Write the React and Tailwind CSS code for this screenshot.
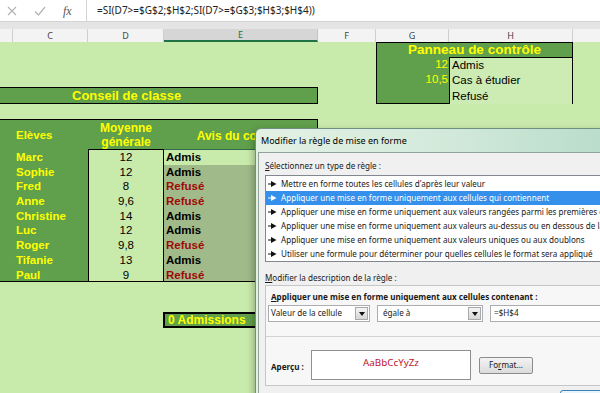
import React from "react";

const ELEVES = [
  { nom: "Marc", moy: "12", avis: "Admis" },
  { nom: "Sophie", moy: "12", avis: "Admis" },
  { nom: "Fred", moy: "8", avis: "Refusé" },
  { nom: "Anne", moy: "9,6", avis: "Refusé" },
  { nom: "Christine", moy: "14", avis: "Admis" },
  { nom: "Luc", moy: "12", avis: "Admis" },
  { nom: "Roger", moy: "9,8", avis: "Refusé" },
  { nom: "Tifanie", moy: "13", avis: "Admis" },
  { nom: "Paul", moy: "9", avis: "Refusé" },
];

const REGLES = [
  "Mettre en forme toutes les cellules d'après leur valeur",
  "Appliquer une mise en forme uniquement aux cellules qui contiennent",
  "Appliquer une mise en forme uniquement aux valeurs rangées parmi les premières ou les dernières valeurs",
  "Appliquer une mise en forme uniquement aux valeurs au-dessus ou en dessous de la moyenne",
  "Appliquer une mise en forme uniquement aux valeurs uniques ou aux doublons",
  "Utiliser une formule pour déterminer pour quelles cellules le format sera appliqué",
];

/* ---------- petits dessins ---------- */
function Fleche({ white }) {
  const c = white ? "#ffffff" : "#111111";
  return (
    <svg width="9" height="6" viewBox="0 0 9 6" className="shrink-0">
      <line x1="0" y1="3" x2="4" y2="3" stroke={c} strokeWidth="1" />
      <polygon points="3,0 8.5,3 3,6" fill={c} />
    </svg>
  );
}

function Bouton() {
  return (
    <div className="w-[13px] h-[13px] flex items-center justify-center border border-[#a9a9a9] bg-gradient-to-b from-[#f4f4f4] to-[#d6d6d6]">
      <svg width="6" height="4" viewBox="0 0 6 4">
        <polygon points="0,0 6,0 3,4" fill="#111" />
      </svg>
    </div>
  );
}

/* ---------- barre de formule + en-têtes ---------- */
function BarreFormule() {
  return (
    <div className="h-[22px] bg-white flex border-b border-[#d4d4d4]">
      <div className="w-[86px] flex items-center">
        <svg width="10" height="10" viewBox="0 0 10 10" className="ml-[7px]">
          <path d="M1 1 L9 9 M9 1 L1 9" stroke="#b4b4b4" strokeWidth="1.2" />
        </svg>
        <svg width="12" height="10" viewBox="0 0 12 10" className="ml-[17px]">
          <path d="M1 5.5 L4.5 9 L11 1" stroke="#b4b4b4" strokeWidth="1.2" fill="none" />
        </svg>
        <span className="ml-[17px] text-[12px] italic text-[#555] font-['Liberation_Serif',serif]">
          fx
        </span>
      </div>
      <div className="flex-1 border-l border-[#d4d4d4] pl-[10px] flex items-center text-[10px] text-[#222] font-['Noto_Sans',sans-serif]">
        =SI(D7&gt;=$G$2;$H$2;SI(D7&gt;=$G$3;$H$3;$H$4))
      </div>
    </div>
  );
}

function EnTetes() {
  const cols = [
    { l: "", w: "w-[13px]" },
    { l: "C", w: "w-[75px]" },
    { l: "D", w: "w-[76px]" },
    { l: "E", w: "w-[154px]", sel: true },
    { l: "F", w: "w-[58px]" },
    { l: "G", w: "w-[73px]" },
    { l: "H", w: "w-[124px]" },
  ];
  return (
    <div className="bg-[#e4e4e4] pt-[7px]">
      <div className="h-[13px] flex bg-[#f3f3f3] text-[9px] font-['Noto_Sans',sans-serif] leading-none">
        {cols.map((c, i) => (
          <div
            key={i}
            className={`${c.w} flex items-center justify-center border-r ${
              c.sel
                ? "bg-[#d6d6d6] text-[#217346] border-b-2 border-b-[#217346] border-r-[#c6c6c6]"
                : "text-[#444] border-[#cfcfcf]"
            }`}
          >
            {c.l}
          </div>
        ))}
        <div className="flex-1" />
      </div>
    </div>
  );
}

/* ---------- feuille ---------- */
function Feuille() {
  return (
    <div className="flex-1 bg-[#c8eaab] leading-none grid grid-cols-[13px_75px_76px_154px_58px_73px_124px_1fr] grid-rows-[16px_15px_15px_16px_16px_29px_repeat(9,14.75px)_15px_15px_16px_1fr] font-['Liberation_Sans',Arial,sans-serif]">
      {/* Panneau de contrôle */}
      <div className="col-start-6 col-span-2 row-start-1 row-span-4 border border-black bg-[#60a04c] flex flex-col">
        <div className="h-[15px] flex items-center justify-center text-[13.5px] font-bold text-[#ffff00]">
          Panneau de contrôle
        </div>
        <div className="flex flex-1">
          <div className="w-[72px] flex flex-col text-[11.5px] text-[#ffff00] text-right pr-[1px]">
            <div className="h-[15px] leading-[15px]">12</div>
            <div className="h-[15px] leading-[15px]">10,5</div>
            <div className="flex-1" />
          </div>
          <div className="flex-1 flex flex-col bg-[#cdecb3] border-l border-t border-black text-[11.5px] text-black pl-[2px]">
            <div className="h-[15px] leading-[15px]">Admis</div>
            <div className="h-[15px] leading-[15px]">Cas à étudier</div>
            <div className="flex-1 leading-[15px] pt-[1px]">Refusé</div>
          </div>
        </div>
      </div>

      {/* Conseil de classe */}
      <div className="col-start-1 col-span-4 row-start-4 -mt-px bg-[#60a04c] border-y-[1.5px] border-r border-black flex items-center pl-[72px] text-[13px] font-bold text-[#ffff00]">
        Conseil de classe
      </div>

      {/* Tableau */}
      <div className="col-start-1 col-span-4 row-start-6 row-span-10 -mt-px bg-[#60a04c] border-t-[1.5px] border-b border-r border-black flex flex-col text-[11.5px] overflow-hidden">
        <div className="h-[29px] shrink-0 flex items-center font-bold text-[#ffff00]">
          <div className="w-[88px] pl-[16px] pt-[2px]">Elèves</div>
          <div className="w-[76px] text-center leading-[14px] text-[12px]">
            Moyenne
            <br />
            générale
          </div>
          <div className="flex-1 text-center text-[12px] pt-[2px]">Avis du conseil</div>
        </div>
        <div className="flex flex-1 min-h-0">
          <div className="w-[88px] flex flex-col font-bold text-[#ffff00] pl-[16px]">
            {ELEVES.map(e => (
              <div key={e.nom} className="h-[14.7px] leading-[14.7px] pt-px">
                {e.nom}
              </div>
            ))}
          </div>
          <div className="w-[76px] flex flex-col bg-[#c8eaab] border-x border-t border-black text-black">
            {ELEVES.map(e => (
              <div key={e.nom} className="h-[14.7px] leading-[14.7px] text-center">
                {e.moy}
              </div>
            ))}
          </div>
          <div className="flex-1 flex flex-col border-t border-[#2f6b4c] font-bold bg-[#a0bb89]">
            {ELEVES.map((e, i) => (
              <div
                key={e.nom}
                className={`h-[14.7px] leading-[14.7px] pl-[2px] ${
                  i === 0 ? "bg-[#c8eaab]" : "bg-[#a0bb89]"
                } ${e.avis === "Admis" ? "text-black" : "text-[#a00808]"}`}
              >
                {e.avis}
              </div>
            ))}
          </div>
        </div>
      </div>

      {/* 0 Admissions */}
      <div className="col-start-4 row-start-18 -ml-px bg-[#60a04c] border-2 border-black flex items-center pl-[3px] text-[12px] font-bold text-[#ffff00]">
        0 Admissions
      </div>
    </div>
  );
}

/* ---------- boîte de dialogue ---------- */
function Dialogue() {
  return (
    <div className="absolute left-[255px] top-[128px] w-[370px] h-[290px] border border-[#6f8f82] rounded-tl-[6px] bg-gradient-to-r from-[#e3f1e3] via-[#d3eadb] to-[#b7dbc8] pl-[2px] flex flex-col shadow-[-2px_2px_6px_rgba(0,0,0,0.25)] font-['Noto_Sans',sans-serif] text-[#1a1a1a]">
      <div className="h-[23px] flex items-center pl-[3px] text-[9px] text-black">
        Modifier la règle de mise en forme
      </div>
      <div className="flex-1 bg-[#f0f0f0] border-l border-t border-[#8fa39a] pl-[6px] pt-[7px] text-[8.1px] flex flex-col">
        <div className="h-[12px] leading-[12px]">
          <span className="underline">S</span>électionnez un type de règle :
        </div>
        <div className="mt-[3px] h-[87px] bg-white border border-[#828790] pt-px flex flex-col">
          {REGLES.map((r, i) => (
            <div
              key={i}
              className={`h-[14px] flex items-center gap-[4px] pl-[2px] whitespace-nowrap overflow-hidden ${
                i === 1 ? "bg-[#3490ea] text-white" : ""
              }`}
            >
              <Fleche white={i === 1} />
              <span>{r}</span>
            </div>
          ))}
        </div>
        <div className="mt-[10px] h-[12px] leading-[12px]">
          <span className="underline">M</span>odifier la description de la règle :
        </div>
        <div className="mt-px h-[101px] bg-[#f7f7f7] border border-[#c6c6c6] flex flex-col">
          <div className="mt-[5px] pl-[5px] h-[12px] leading-[12px] font-bold">
            <span className="underline">A</span>ppliquer une mise en forme uniquement aux cellules contenant :
          </div>
          <div className="mt-[2px] pl-[2px] flex gap-[7px] h-[17px]">
            <div className="w-[102px] bg-white border border-[#abadb3] flex items-center justify-between pl-[2px] pr-px">
              <span>Valeur de la cellule</span>
              <Bouton />
            </div>
            <div className="w-[106px] bg-white border border-[#abadb3] flex items-center justify-between pl-[5px] pr-px">
              <span>égale à</span>
              <Bouton />
            </div>
            <div className="flex-1 bg-white border border-[#abadb3] flex items-center pl-[3px]">
              =$H$4
            </div>
          </div>
          <div className="mt-[14px] h-px bg-[#d3d3d3]" />
          <div className="mt-[13px] flex items-center">
            <div className="w-[45px] pl-[5px] pt-[5px] font-bold">Aperçu :</div>
            <div className="w-[160px] h-[30px] bg-white border border-[#8e8f8f] flex items-center justify-center pb-[3px] text-[9.8px] text-[#c0142b]">
              AaBbCcYyZz
            </div>
            <div className="ml-[8px] w-[54px] h-[17px] rounded-[2px] border border-[#8c8c8c] bg-gradient-to-b from-[#f3f3f3] to-[#dcdcdc] flex items-center justify-center">
              Fo<span className="underline">r</span>mat...
            </div>
          </div>
        </div>
        <div className="mt-[4px] ml-[295px] w-[72px] h-[22px] rounded-[3px] border border-[#3c7fb1] bg-gradient-to-b from-[#eaf6fd] to-[#bee6fd]" />
      </div>
    </div>
  );
}

export default function App() {
  return (
    <div className="relative w-[600px] h-[393px] overflow-hidden bg-white flex flex-col">
      <BarreFormule />
      <EnTetes />
      <Feuille />
      <Dialogue />
    </div>
  );
}
